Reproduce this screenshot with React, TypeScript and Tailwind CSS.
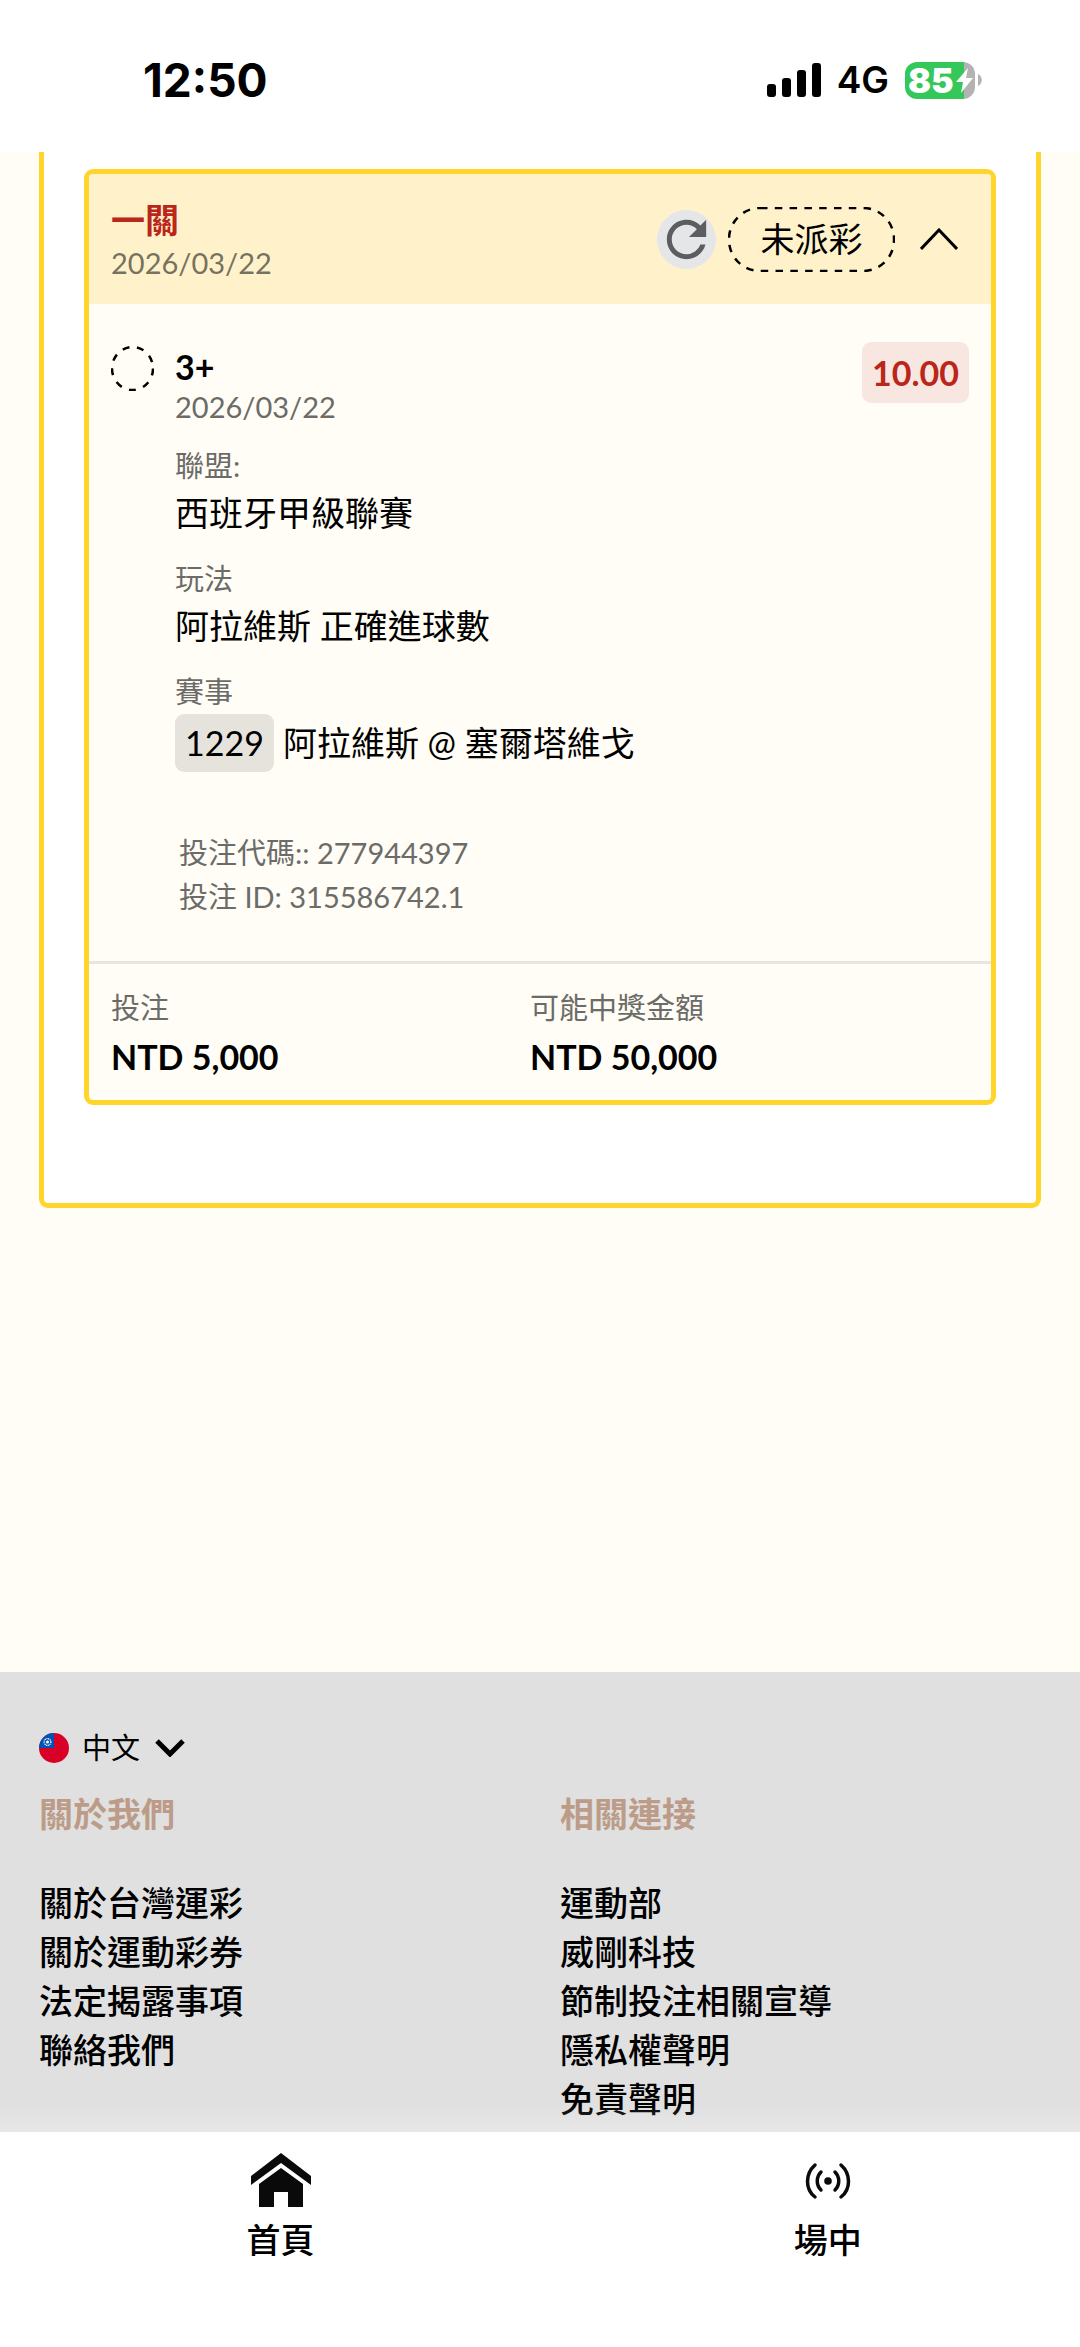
import { useState } from 'react'
import type { ReactNode } from 'react'
import { MdRefresh } from 'react-icons/md'

const aboutLinks = ['關於台灣運彩', '關於運動彩券', '法定揭露事項', '聯絡我們']
const relatedLinks = [
  '運動部',
  '威剛科技',
  '節制投注相關宣導',
  '隱私權聲明',
  '免責聲明',
]

function StatusBar() {
  return (
    <header className="flex h-[152px] items-center justify-between bg-white pt-2 pr-[98px] pl-[143px] font-['Inter','Noto_Sans_CJK_TC',sans-serif]">
      <span className="text-[46px] leading-[56px] font-bold">12:50</span>
      <div className="flex items-center gap-4">
        <svg width="54" height="34" viewBox="0 0 54 34" aria-hidden="true">
          <rect x="0" y="21" width="9" height="13" rx="3" />
          <rect x="15" y="15" width="9" height="19" rx="3" />
          <rect x="30" y="7" width="9" height="27" rx="3" />
          <rect x="45" y="0" width="9" height="34" rx="3" />
        </svg>
        <span className="text-[37px] leading-[44px] font-semibold">4G</span>
        <div className="flex items-center gap-[3px]">
          <div className="relative flex h-[37px] w-[70px] items-center rounded-[12px] bg-[linear-gradient(to_right,#34c759_59px,#b3b3b3_59px)] pl-[3px]">
            <span className="text-[34px] leading-[37px] font-black text-white">
              85
            </span>
            <svg
              className="absolute top-[6px] right-[2px]"
              width="17"
              height="25"
              viewBox="0 0 17 25"
              fill="#fff"
              aria-hidden="true"
            >
              <path d="M12 0 0 14h7L5 25 17 10h-7Z" />
            </svg>
          </div>
          <svg width="4" height="12" viewBox="0 0 4 12" fill="#b3b3b3" aria-hidden="true">
            <path d="M0 0c5 2 5 10 0 12Z" />
          </svg>
        </div>
      </div>
    </header>
  )
}

function Field({ label, children }: { label: string; children: ReactNode }) {
  return (
    <div className="mb-[19px]">
      <dt className="text-[29px] leading-[44px] text-[#6b6b68]">{label}</dt>
      <dd className="flex min-h-[50px] items-center text-[34px] leading-[50px]">
        {children}
      </dd>
    </div>
  )
}

function BetCard() {
  const [open, setOpen] = useState(true)

  return (
    <article className="overflow-hidden rounded-[9px] border-[5px] border-[#ffd52b] bg-[#fffdf5]">
      <div className="flex h-[130px] items-center justify-between bg-[#fff2cb] pr-5 pl-[22px]">
        <div className="pt-1">
          <h2 className="text-[34px] leading-[44px] font-bold text-[#bb261a]">一關</h2>
          <p className="text-[29px] leading-[42px] text-[#77725f]">2026/03/22</p>
        </div>
        <div className="flex items-center gap-3">
          <button
            type="button"
            aria-label="重新整理"
            className="flex size-[59px] items-center justify-center rounded-full bg-[#e5e6e8] text-[#5c5d60]"
          >
            <MdRefresh size={59} />
          </button>
          <span className="relative flex h-[65px] w-[167px] items-center justify-center text-[34px] leading-[50px]">
            <svg
              className="absolute inset-0"
              width="167"
              height="65"
              viewBox="0 0 167 65"
              fill="none"
              aria-hidden="true"
            >
              <rect
                x="1"
                y="1"
                width="165"
                height="63"
                rx="31"
                stroke="#000"
                strokeWidth="2.5"
                strokeDasharray="7.5 7.3"
              />
            </svg>
            未派彩
          </span>
          <button
            type="button"
            aria-label="收合"
            aria-expanded={open}
            onClick={() => setOpen(!open)}
            className="flex h-[59px] w-[64px] items-center justify-center"
          >
            <svg
              className={open ? '' : 'rotate-180'}
              width="38"
              height="22"
              viewBox="0 0 38 22"
              fill="none"
              stroke="#000"
              strokeWidth="3"
              aria-hidden="true"
            >
              <path d="M1 21 19 2l18 19" />
            </svg>
          </button>
        </div>
      </div>

      {open && (
        <div className="flex items-start border-b-[3px] border-[#e8e6e1] px-[22px] pt-[38px] pb-[42px]">
          <svg
            className="mt-1 mr-[21px] shrink-0"
            width="43"
            height="45"
            viewBox="0 0 43 45"
            fill="none"
            aria-hidden="true"
          >
            <ellipse
              cx="21.5"
              cy="22.5"
              rx="20.5"
              ry="21.5"
              stroke="#000"
              strokeWidth="2.5"
              strokeDasharray="7 7.7"
            />
          </svg>
          <div className="flex-1">
            <h3 className="text-[34px] leading-[50px] font-bold">3+</h3>
            <p className="text-[29px] leading-[30px] text-[#6b6b68]">2026/03/22</p>
            <dl className="mt-[22px]">
              <Field label="聯盟:">西班牙甲級聯賽</Field>
              <Field label="玩法">阿拉維斯 正確進球數</Field>
              <Field label="賽事">
                <span className="mr-[9px] rounded-[9px] bg-[#e6e3dd] px-[10px] py-1">
                  1229
                </span>
                阿拉維斯 @ 塞爾塔維戈
              </Field>
            </dl>
            <div className="mt-[59px] pl-1 text-[29px] leading-[44px] text-[#6b6b68]">
              <p>投注代碼:: 277944397</p>
              <p>投注 ID: 315586742.1</p>
            </div>
          </div>
          <span className="rounded-[9px] bg-[#f8e7e0] px-[10px] text-[34px] leading-[61px] font-bold text-[#bb261a]">
            10.00
          </span>
        </div>
      )}

      <dl className="grid grid-cols-2 pt-[21px] pr-[42px] pb-[17px] pl-[22px]">
        <div>
          <dt className="text-[29px] leading-[46px] text-[#6b6b68]">投注</dt>
          <dd className="text-[34px] leading-[52px] font-bold">NTD 5,000</dd>
        </div>
        <div>
          <dt className="text-[29px] leading-[46px] text-[#6b6b68]">可能中獎金額</dt>
          <dd className="text-[34px] leading-[52px] font-bold">NTD 50,000</dd>
        </div>
      </dl>
    </article>
  )
}

function FlagIcon() {
  return (
    <svg className="size-[30px] rounded-full" viewBox="0 0 30 30" aria-hidden="true">
      <rect width="30" height="30" fill="#d80027" />
      <rect width="15" height="15" fill="#0052b4" />
      <circle cx="8.5" cy="9" r="3.4" fill="none" stroke="#fff" strokeWidth="1.2" strokeDasharray="1.2 0.6" />
      <circle cx="8.5" cy="9" r="1.5" fill="#fff" />
    </svg>
  )
}

function LinkColumn({ title, links }: { title: string; links: string[] }) {
  return (
    <section>
      <h2 className="mb-[39px] text-[34px] leading-[50px] font-bold text-[#bc9c88]">
        {title}
      </h2>
      <ul>
        {links.map((link) => (
          <li key={link} className="text-[34px] leading-[49px] font-medium">
            <a href="#">{link}</a>
          </li>
        ))}
      </ul>
    </section>
  )
}

function SiteFooter() {
  return (
    <footer className="bg-[#e0e0e0] px-[39px] pt-[54px] pb-[9px]">
      <button type="button" className="flex items-center gap-[13px] text-[29px] leading-[44px]">
        <FlagIcon />
        中文
        <svg
          className="ml-0.5"
          width="30"
          height="18"
          viewBox="0 0 30 18"
          fill="none"
          stroke="#000"
          strokeWidth="5"
          aria-hidden="true"
        >
          <path d="M2 2l13 13L28 2" />
        </svg>
      </button>
      <div className="mt-[19px] grid grid-cols-[52%_1fr]">
        <LinkColumn title="關於我們" links={aboutLinks} />
        <LinkColumn title="相關連接" links={relatedLinks} />
      </div>
    </footer>
  )
}

function TabBar() {
  return (
    <nav className="relative flex min-h-[216px] items-start overflow-x-clip bg-white pl-[7px] before:absolute before:inset-x-0 before:-top-[28px] before:h-[28px] before:bg-linear-to-t before:from-white/25 before:to-transparent">
      <a
        href="#"
        className="flex shrink-0 basis-[51%] flex-col items-center gap-2 pt-[21px] text-[34px] leading-[50px] font-medium"
      >
        <svg width="60" height="54" viewBox="0 0 60 54" fill="#0a0a0a" aria-hidden="true">
          <path d="M30 0 60 23v9L30 10 0 32v-9Z" />
          <path d="M30 15 52 31v23H37V39H23v15H8V31Z" />
        </svg>
        首頁
      </a>
      <a
        href="#"
        className="flex shrink-0 basis-[51%] flex-col items-center gap-2 pt-[21px] text-[34px] leading-[50px] font-medium"
      >
        <svg
          width="46"
          height="54"
          viewBox="0 0 46 54"
          fill="none"
          stroke="#0a0a0a"
          strokeWidth="3.5"
          strokeLinecap="round"
          aria-hidden="true"
        >
          <circle cx="23" cy="28" r="3.8" fill="#0a0a0a" stroke="none" />
          <path d="M10 12C0 21 0 36 10 44M36 12c10 9 10 24 0 32" />
          <path d="M16 19c-5 5-5 13 0 18M30 19c5 5 5 13 0 18" />
        </svg>
        場中
      </a>
    </nav>
  )
}

export default function App() {
  return (
    <div className="flex min-h-screen flex-col bg-[#fffdf5] font-['Lato','Noto_Sans_CJK_TC',sans-serif] text-black">
      <StatusBar />
      <main className="px-[39px] pb-[464px]">
        <div className="rounded-b-[9px] border-x-[5px] border-b-[5px] border-[#ffd52b] bg-white px-10 pt-[17px] pb-[98px]">
          <BetCard />
        </div>
      </main>
      <SiteFooter />
      <TabBar />
    </div>
  )
}
